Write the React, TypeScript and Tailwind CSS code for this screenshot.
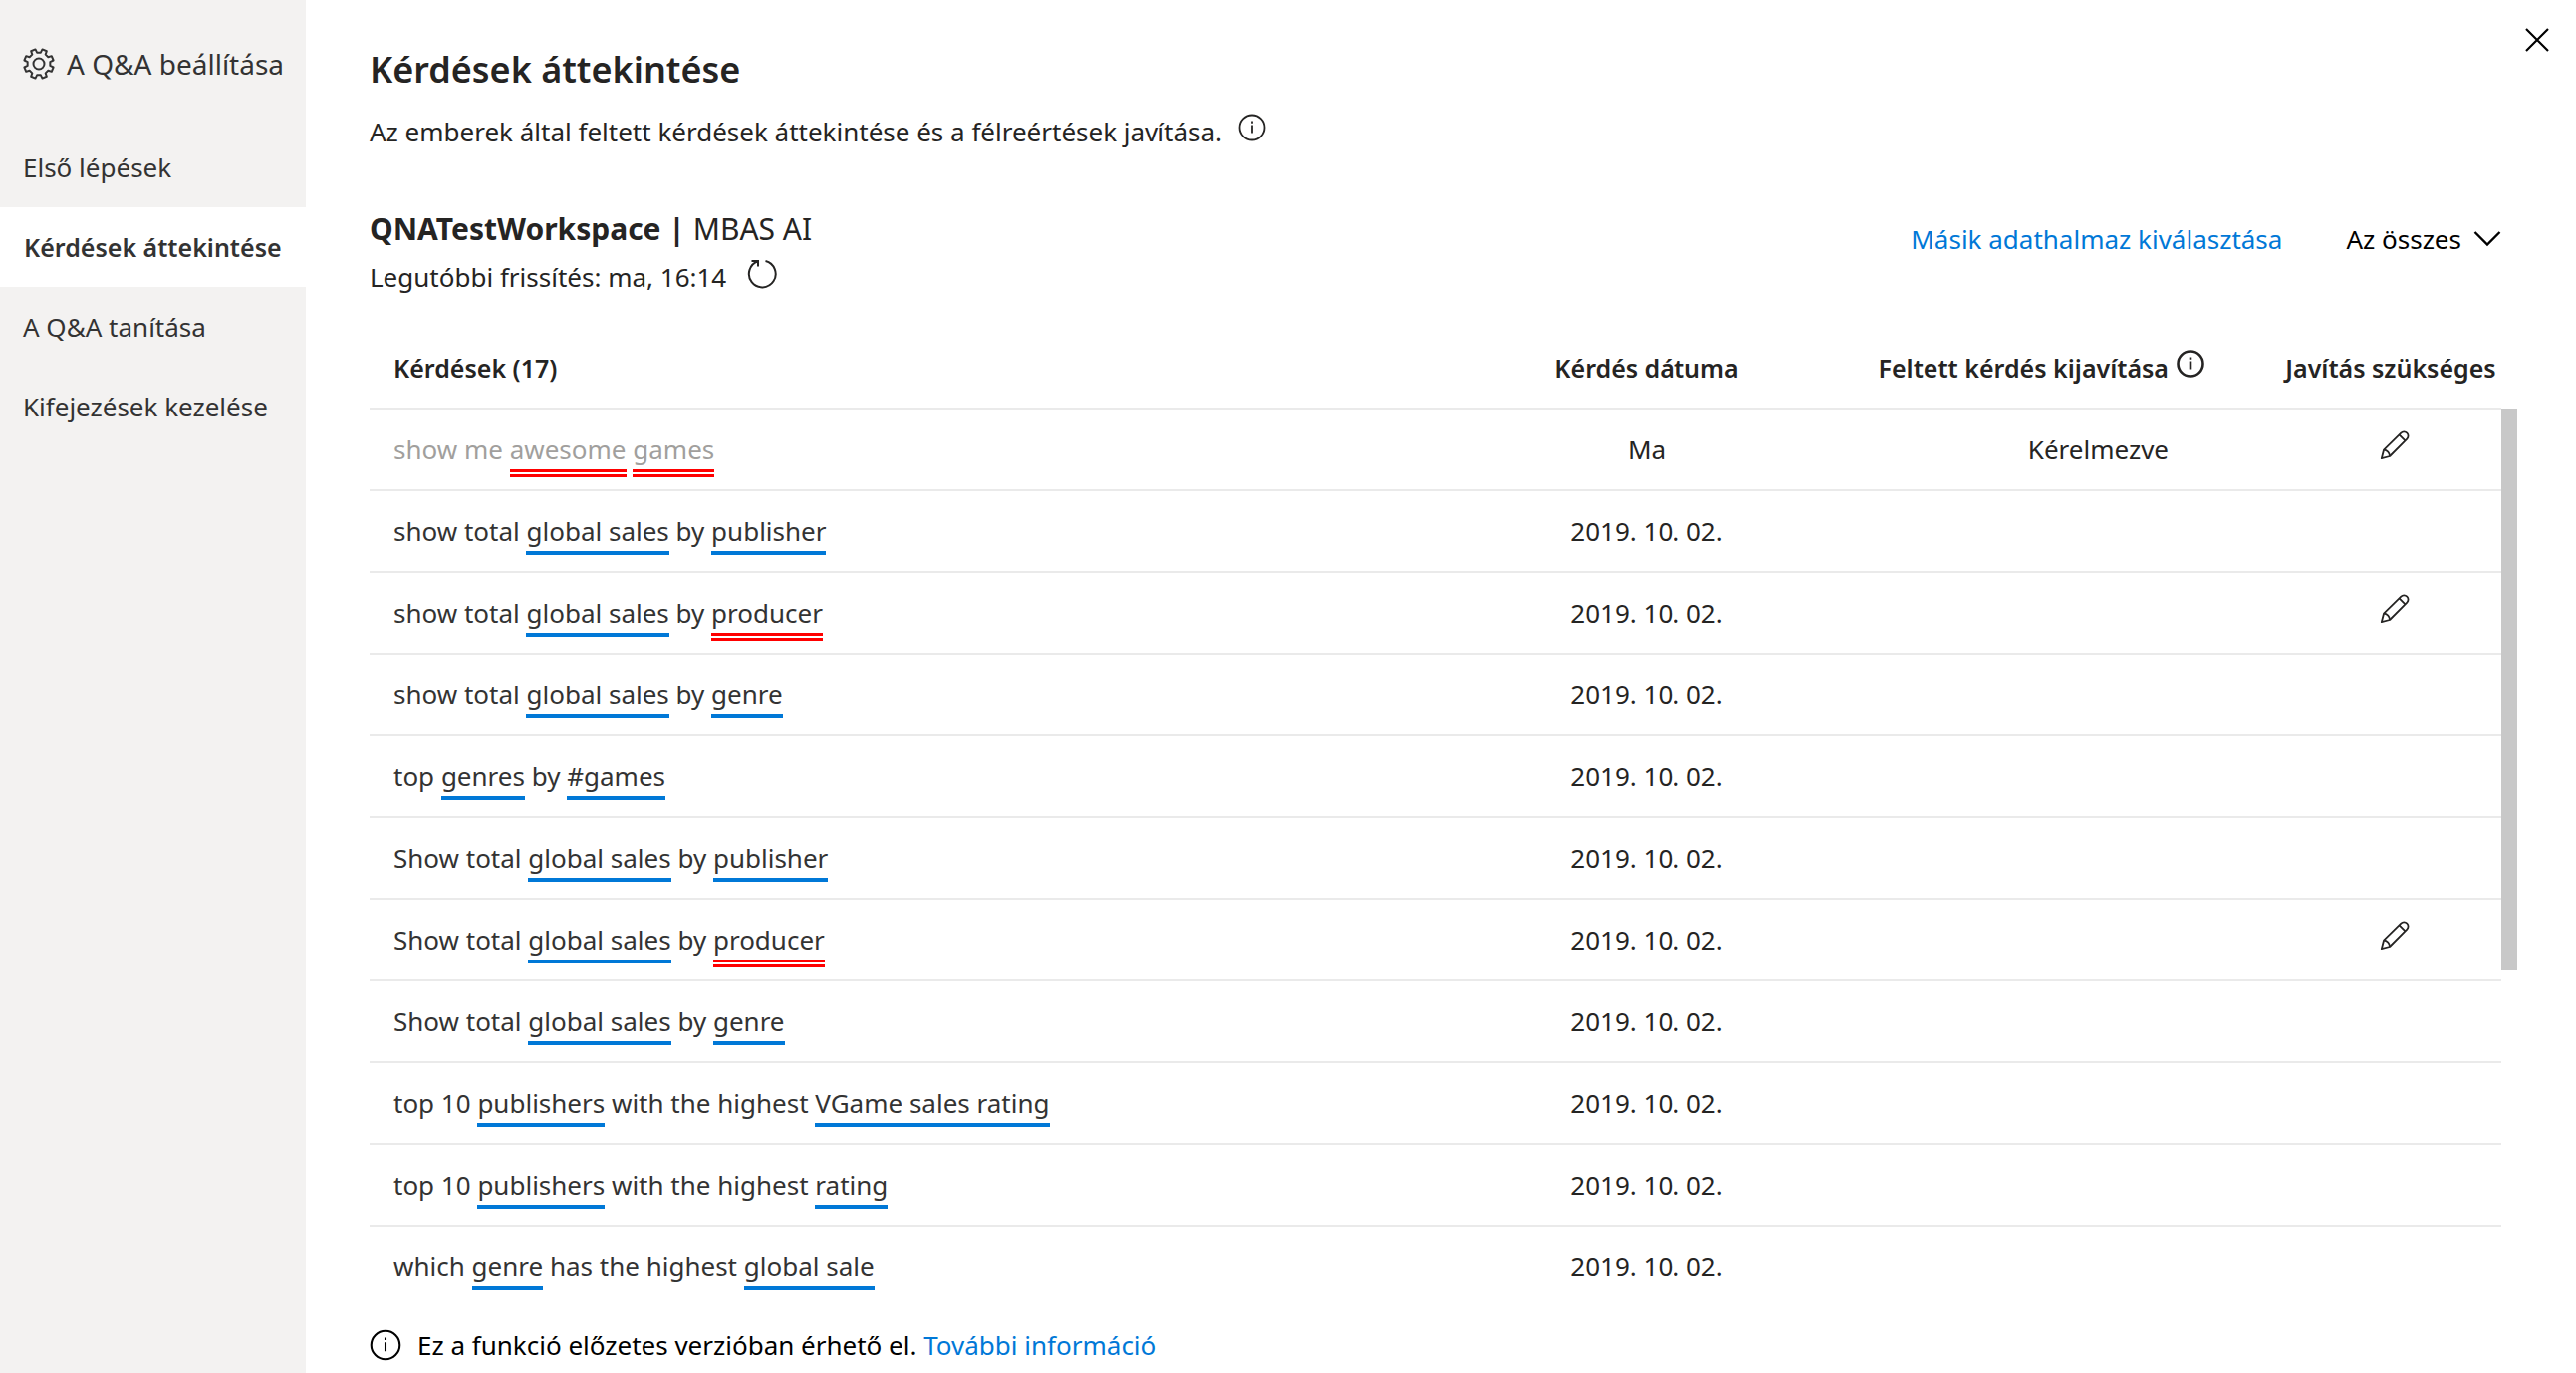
import React from "react";

type Part = { text: string; mark?: "known" | "unknown" };
type Question = { parts: Part[]; date: string; fixed?: string; needsFix?: boolean; muted?: boolean };

const k = (text: string): Part => ({ text, mark: "known" });
const u = (text: string): Part => ({ text, mark: "unknown" });
const t = (text: string): Part => ({ text });

const DATE = "2019. 10. 02.";

const questions: Question[] = [
  { parts: [t("show me "), u("awesome"), t(" "), u("games")], date: "Ma", fixed: "Kérelmezve", needsFix: true, muted: true },
  { parts: [t("show total "), k("global sales"), t(" by "), k("publisher")], date: DATE },
  { parts: [t("show total "), k("global sales"), t(" by "), u("producer")], date: DATE, needsFix: true },
  { parts: [t("show total "), k("global sales"), t(" by "), k("genre")], date: DATE },
  { parts: [t("top "), k("genres"), t(" by "), k("#games")], date: DATE },
  { parts: [t("Show total "), k("global sales"), t(" by "), k("publisher")], date: DATE },
  { parts: [t("Show total "), k("global sales"), t(" by "), u("producer")], date: DATE, needsFix: true },
  { parts: [t("Show total "), k("global sales"), t(" by "), k("genre")], date: DATE },
  { parts: [t("top 10 "), k("publishers"), t(" with the highest "), k("VGame sales rating")], date: DATE },
  { parts: [t("top 10 "), k("publishers"), t(" with the highest "), k("rating")], date: DATE },
  { parts: [t("which "), k("genre"), t(" has the highest "), k("global sale")], date: DATE },
];

const navItems = ["Első lépések", "Kérdések áttekintése", "A Q&A tanítása", "Kifejezések kezelése"];

// Eight teeth, the first one half a pitch off the vertical axis.
const gearOutline = Array.from({ length: 8 }, (_, i) => {
  const middle = 22.5 + i * 45;
  return [
    [-13, 11.5],
    [-9, 15],
    [9, 15],
    [13, 11.5],
  ]
    .map(([offset, radius]) => {
      const angle = ((middle + offset) * Math.PI) / 180;
      return `${(16 + radius * Math.sin(angle)).toFixed(2)},${(16 - radius * Math.cos(angle)).toFixed(2)}`;
    })
    .join(" ");
}).join(" ");

function GearIcon() {
  return (
    <svg className="size-8 shrink-0" viewBox="0 0 32 32" fill="none" stroke="currentColor" strokeWidth="2" strokeLinejoin="round" aria-hidden="true">
      <polygon points={gearOutline} />
      <circle cx="16" cy="16" r="5.500" />
    </svg>
  );
}

function InfoIcon({ bold = false, large = false }: { bold?: boolean; large?: boolean }) {
  return (
    <svg
      className={large ? "size-8 shrink-0" : "size-7 shrink-0"}
      viewBox="0 0 28 28"
      fill="none"
      stroke="currentColor"
      strokeWidth={bold ? 2.6 : 1.8}
      aria-hidden="true"
    >
      <circle cx="14" cy="14" r="12.500" />
      <path d="M14 11.500v8M14 7.500v2.200" />
    </svg>
  );
}

function RefreshIcon() {
  return (
    <svg className="size-8" viewBox="0 0 32 32" fill="none" stroke="currentColor" strokeWidth="2" aria-hidden="true">
      <path d="M19.500 4A13.400 13.400 0 1 1 12 4.300M5.500 4H12v5.500" />
    </svg>
  );
}

function PencilIcon() {
  return (
    <svg className="size-8" viewBox="0 0 32 32" fill="none" stroke="currentColor" strokeWidth="1.800" strokeLinejoin="round" aria-hidden="true">
      <path d="M2.800 29.200l2.200-8.500L22.300 3.600a4.200 4.200 0 0 1 6 6L11 27z" />
      <path d="M5 20.700c3.300 0 6 2.800 6 6.300M20.500 5.400l6 6" />
    </svg>
  );
}

function QuestionText({ parts }: { parts: Part[] }) {
  return (
    <>
      {parts.map((p, i) =>
        p.mark === "known" ? (
          <span key={i} className="border-b-4 border-[#0078d7] pb-0.5">{p.text}</span>
        ) : p.mark === "unknown" ? (
          <span key={i} className="border-b-8 border-double border-[#ff0000] pb-0.5">{p.text}</span>
        ) : (
          <React.Fragment key={i}>{p.text}</React.Fragment>
        ),
      )}
    </>
  );
}

export default function App() {
  return (
    <div className="flex min-h-screen bg-white font-['Noto_Sans','Open_Sans',sans-serif] text-[26px] leading-9 text-[#252423]">
      <aside className="w-[307px] shrink-0 bg-[#f3f2f1] text-[#333333]">
        <h2 className="flex h-32 items-center gap-3 whitespace-nowrap pl-[23px] text-[28px]">
          <GearIcon />
          A Q&amp;A beállítása
        </h2>
        <nav className="flex flex-col">
          {navItems.map((item, i) => (
            <a
              key={item}
              href="#"
              aria-current={i === 1 ? "page" : undefined}
              className={
                i === 1
                  ? "flex h-20 items-center whitespace-nowrap bg-white pl-6 text-[25px] font-semibold"
                  : "flex h-20 items-center whitespace-nowrap pl-[23px]"
              }
            >
              {item}
            </a>
          ))}
        </nav>
      </aside>

      <main className="flex min-w-0 grow flex-col pl-16 pr-[59px]">
        <header className="flex justify-between pt-[46px]">
          <div>
            <h1 className="text-[36px] font-semibold leading-12">Kérdések áttekintése</h1>
            <p className="mt-5 flex items-center gap-4">
              Az emberek által feltett kérdések áttekintése és a félreértések javítása.
              <button type="button" aria-label="Súgó" className="mb-2"><InfoIcon /></button>
            </p>
          </div>
          <button type="button" aria-label="Bezárás" className="-mr-[34px] -mt-5 size-7 text-black">
            <svg viewBox="0 0 28 28" fill="none" stroke="currentColor" strokeWidth="2.200" aria-hidden="true">
              <path d="M3 3l22 22M25 3L3 25" />
            </svg>
          </button>
        </header>

        <section className="mt-14 flex items-start justify-between">
          <div>
            <h2 className="text-[30px] leading-12"><b>QNATestWorkspace |</b> MBAS AI</h2>
            <p className="flex items-center gap-5 leading-12">
              Legutóbbi frissítés: ma, 16:14
              <button type="button" aria-label="Frissítés" className="mb-2"><RefreshIcon /></button>
            </p>
          </div>
          <div className="flex items-center gap-16 pr-4 pt-4">
            <a href="#" className="text-[#0078d7]">Másik adathalmaz kiválasztása</a>
            <button type="button" className="flex items-center gap-3 text-black">
              Az összes
              <svg className="h-5 w-7" viewBox="0 0 28 20" fill="none" stroke="currentColor" strokeWidth="2.400" aria-hidden="true">
                <path d="M1.500 3L14 15.500 26.500 3" />
              </svg>
            </button>
          </div>
        </section>

        <div className="mt-[26px] flex max-h-[982px] overflow-hidden">
          <table className="grow table-fixed border-collapse">
            <colgroup>
              <col />
              <col className="w-[260px]" />
              <col className="w-[450px]" />
              <col className="w-[278px]" />
            </colgroup>
            <thead className="text-[25px]">
              <tr className="h-[82px] border-b-2 border-[#eaeaea]">
                <th scope="col" className="pl-6 text-left font-semibold">Kérdések (17)</th>
                <th scope="col" className="text-center font-semibold">Kérdés dátuma</th>
                <th scope="col" className="font-semibold">
                  <span className="flex items-center justify-end gap-2 whitespace-nowrap pr-5">
                    Feltett kérdés kijavítása
                    <button type="button" aria-label="Súgó" className="mb-2"><InfoIcon bold /></button>
                  </span>
                </th>
                <th scope="col" className="whitespace-nowrap pl-14 text-center font-semibold">Javítás szükséges</th>
              </tr>
            </thead>
            <tbody>
              {questions.map((q, i) => (
                <tr key={i} className="h-[82px] border-b-2 border-[#eaeaea]">
                  <td className={q.muted ? "whitespace-nowrap pl-6 text-[#a19f9d]" : "whitespace-nowrap pl-6 text-[#333333]"}>
                    <QuestionText parts={q.parts} />
                  </td>
                  <td className="text-center">{q.date}</td>
                  <td className="pr-14 text-right">{q.fixed}</td>
                  <td className="pl-16 text-center">
                    {q.needsFix && (
                      <button type="button" aria-label="Javítás" className="mx-auto mb-2 block"><PencilIcon /></button>
                    )}
                  </td>
                </tr>
              ))}
            </tbody>
          </table>
          <div className="mt-[82px] h-[564px] w-4 shrink-0 bg-[#c8c8c8]" />
        </div>

        <footer className="mt-[22px] flex items-center gap-4 text-black">
          <InfoIcon large />
          <p>
            Ez a funkció előzetes verzióban érhető el.{" "}
            <a href="#" className="text-[#0078d7]">További információ</a>
          </p>
        </footer>
      </main>
    </div>
  );
}
